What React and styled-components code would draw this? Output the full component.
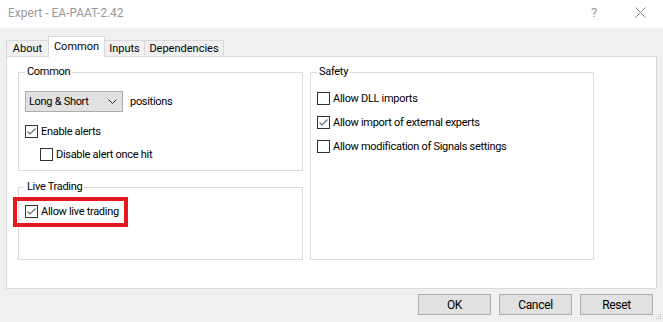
import React from "react";
import styled, { createGlobalStyle } from "styled-components";

const GlobalStyle = createGlobalStyle`
  html, body {
    margin: 0;
    padding: 0;
    background: #f0f0f0;
  }
  body {
    font-family: Roboto, "Liberation Sans", sans-serif;
    font-size: 11px;
    color: #000;
  }
`;

const Window = styled.div`
  position: relative;
  width: 663px;
  height: 322px;
  display: flex;
  flex-direction: column;
  background: #f0f0f0;
  overflow: hidden;
`;

const TitleBar = styled.div`
  height: 28px;
  display: flex;
  align-items: center;
  background: #fff;
  color: #999;
  font-size: 12px;
`;

const Title = styled.div`
  flex: 1;
  padding-left: 8px;
  margin-top: -3px;
`;

const CaptionButton = styled.div`
  width: 46px;
  height: 28px;
  display: flex;
  align-items: center;
  justify-content: center;
  margin-top: -4px;
  color: #999;
  font-size: 13px;
`;

const Body = styled.div`
  padding: 8px 6px 0 6px;
`;

const TabRow = styled.div`
  display: flex;
  align-items: flex-end;
  height: 20px;
`;

const Tab = styled.div`
  position: relative;
  z-index: ${(p) => (p.$active ? 2 : 1)};
  box-sizing: border-box;
  width: ${(p) => p.$width}px;
  height: ${(p) => (p.$active ? 21 : 16)}px;
  margin-bottom: ${(p) => (p.$active ? -1 : 0)}px;
  margin-left: ${(p) => (p.$first ? 0 : -1)}px;
  display: flex;
  align-items: center;
  justify-content: center;
  padding-bottom: ${(p) => (p.$active ? 2 : 0)}px;
  border: 1px solid #d9d9d9;
  border-bottom: none;
  background: ${(p) => (p.$active ? "#fff" : "#f0f0f0")};
`;

const Panel = styled.div`
  box-sizing: border-box;
  width: 651px;
  height: 233px;
  border: 1px solid #d9d9d9;
  background: #fff;
  letter-spacing: -0.3px;
`;

const PanelGrid = styled.div`
  display: grid;
  grid-template-columns: 285px 284px;
  grid-template-rows: 99px 73px;
  column-gap: 7px;
  row-gap: 16px;
  padding: 15px 0 0 11px;
`;

const Group = styled.div`
  position: relative;
  box-sizing: border-box;
  border: 1px solid #dcdcdc;
  padding: ${(p) => p.$top}px 0 0 6px;
  grid-row: ${(p) => (p.$tall ? "1 / span 2" : "auto")};
  grid-column: ${(p) => p.$col};
`;

const Legend = styled.div`
  position: absolute;
  top: -8px;
  left: 6px;
  padding: 0 2px;
  background: #fff;
  line-height: 14px;
`;

const SelectRow = styled.div`
  display: flex;
  align-items: center;
  gap: 7px;
`;

const Select = styled.div`
  box-sizing: border-box;
  width: 98px;
  height: 21px;
  display: flex;
  align-items: center;
  justify-content: space-between;
  padding: 0 5px 0 3px;
  border: 1px solid #adadad;
  background: #e1e1e1;
`;

const CheckRow = styled.div`
  display: flex;
  align-items: center;
  height: 13px;
  margin-top: ${(p) => p.$gap || 0}px;
  margin-left: ${(p) => p.$indent || 0}px;
`;

const Box = styled.span`
  box-sizing: border-box;
  width: 13px;
  height: 13px;
  flex: none;
  display: flex;
  align-items: center;
  justify-content: center;
  border: 1px solid #333;
  background: #fff;
`;

const Label = styled.span`
  margin-left: 3px;
  white-space: nowrap;
`;

const Highlight = styled.div`
  position: absolute;
  top: 9px;
  left: -6px;
  width: 115px;
  height: 30px;
  box-sizing: border-box;
  border: 4px solid #e8161f;
  pointer-events: none;
`;

const Footer = styled.div`
  display: flex;
  justify-content: flex-end;
  gap: 8px;
  padding: 5px 10px 0 0;
`;

const Button = styled.div`
  box-sizing: border-box;
  width: 73px;
  height: 21px;
  display: flex;
  align-items: center;
  justify-content: center;
  border: 1px solid #adadad;
  background: #e1e1e1;
  font-size: 12px;
  letter-spacing: -0.3px;
`;

const Grip = styled.svg`
  position: absolute;
  right: 1px;
  bottom: 2px;
`;

const Check = ({ checked, label, gap, indent }) => (
  <CheckRow $gap={gap} $indent={indent}>
    <Box>
      {checked && (
        <svg width="11" height="11" viewBox="0 0 11 11">
          <polyline
            points="1.5,5.5 4,8 9.5,2.5"
            fill="none"
            stroke="#666"
            strokeWidth="1.1"
          />
        </svg>
      )}
    </Box>
    <Label>{label}</Label>
  </CheckRow>
);

const tabs = [
  { name: "About", width: 43 },
  { name: "Common", width: 57, active: true },
  { name: "Inputs", width: 41 },
  { name: "Dependencies", width: 80 },
];

export default function App() {
  return (
    <Window>
      <GlobalStyle />
      <TitleBar>
        <Title>Expert - EA-PAAT-2.42</Title>
        <CaptionButton>?</CaptionButton>
        <CaptionButton>
          <svg width="11" height="11" viewBox="0 0 11 11">
            <path d="M0.5 0.5 L10.5 10.5 M10.5 0.5 L0.5 10.5" stroke="#888" strokeWidth="1" />
          </svg>
        </CaptionButton>
      </TitleBar>

      <Body>
        <TabRow>
          {tabs.map((t, i) => (
            <Tab key={t.name} $width={t.width} $active={t.active} $first={i === 0}>
              {t.name}
            </Tab>
          ))}
        </TabRow>

        <Panel>
          <PanelGrid>
            <Group $top={18} $col={1}>
              <Legend>Common</Legend>
              <SelectRow>
                <Select>
                  <span>Long &amp; Short</span>
                  <svg width="9" height="5" viewBox="0 0 9 5">
                    <polyline points="0.5,0.5 4.5,4.5 8.5,0.5" fill="none" stroke="#333" strokeWidth="1" />
                  </svg>
                </Select>
                <span>positions</span>
              </SelectRow>
              <Check checked label="Enable alerts" gap={13} />
              <Check label="Disable alert once hit" gap={10} indent={15} />
            </Group>

            <Group $top={17} $col={1}>
              <Legend>Live Trading</Legend>
              <Check checked label="Allow live trading" />
              <Highlight />
            </Group>

            <Group $top={19} $col={2} $tall>
              <Legend>Safety</Legend>
              <Check label="Allow DLL imports" />
              <Check checked label="Allow import of external experts" gap={11} />
              <Check label="Allow modification of Signals settings" gap={11} />
            </Group>
          </PanelGrid>
        </Panel>
      </Body>

      <Footer>
        <Button>OK</Button>
        <Button>Cancel</Button>
        <Button>Reset</Button>
      </Footer>

      <Grip width="7" height="7" viewBox="0 0 7 7">
        <rect x="5" y="1" width="1" height="1" fill="#bbb" />
        <rect x="3" y="3" width="1" height="1" fill="#bbb" />
        <rect x="5" y="3" width="1" height="1" fill="#bbb" />
        <rect x="1" y="5" width="1" height="1" fill="#bbb" />
        <rect x="3" y="5" width="1" height="1" fill="#bbb" />
        <rect x="5" y="5" width="1" height="1" fill="#bbb" />
      </Grip>
    </Window>
  );
}
